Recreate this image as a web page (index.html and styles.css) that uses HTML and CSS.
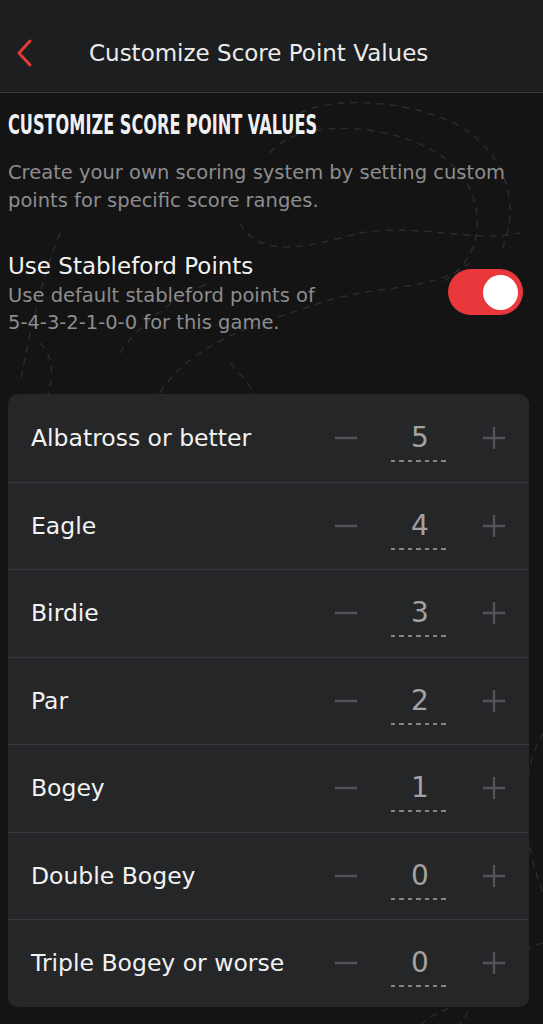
FILE: index.html
```html
<!DOCTYPE html>
<html lang="en">
<head>
    <meta charset="UTF-8">
    <meta name="viewport" content="width=device-width, initial-scale=1.0">
    <title>Customize Score Point Values</title>
    <link rel="stylesheet" href="styles.css">
</head>
<body>

<!-- Top bar -->
<header class="topbar">
    <button class="back-btn" aria-label="Back">
        <svg width="18" height="28" viewBox="0 0 18 28">
            <path d="M15 2 L4 14 L15 26" fill="none" stroke="#e53935" stroke-width="3" stroke-linecap="round" stroke-linejoin="round"/>
        </svg>
    </button>
    <h1 class="topbar-title">Customize Score Point Values</h1>
</header>

<main class="content">
    <!-- decorative course lines in the background -->
    <svg class="topo" width="543" height="932" viewBox="0 0 543 932">
        <g fill="none" stroke="#2b2b2d" stroke-width="1.5" stroke-dasharray="7 6">
            <path d="M300 20 C 340 0, 430 10, 470 40 C 510 70, 520 120, 500 160"/>
            <path d="M270 60 C 300 20, 420 30, 460 80 C 490 120, 480 170, 440 190"/>
            <path d="M240 130 C 260 170, 320 150, 360 140 C 420 130, 470 150, 520 140"/>
            <path d="M160 300 C 190 250, 260 230, 320 210 C 380 190, 430 200, 470 170"/>
            <path d="M60 140 C 40 190, 30 240, 20 290"/>
            <path d="M120 260 C 140 230, 180 200, 210 190"/>
            <path d="M40 250 C 60 270, 50 300, 40 320"/>
            <path d="M230 270 C 250 290, 260 310, 270 320"/>
            <path d="M543 640 C 520 680, 520 740, 543 800"/>
            <path d="M543 850 C 500 860, 480 900, 460 932"/>
            <path d="M420 932 C 440 915, 470 905, 500 910"/>
        </g>
    </svg>

    <h2 class="section-title">Customize Score Point Values</h2>
    <p class="section-desc">Create your own scoring system by setting custom points for specific score ranges.</p>

    <div class="setting-row">
        <div class="setting-text">
            <h3 class="setting-name">Use Stableford Points</h3>
            <p class="setting-hint">Use default stableford points of<br>5-4-3-2-1-0-0 for this game.</p>
        </div>
        <label class="switch">
            <input type="checkbox" checked>
            <span class="slider"></span>
        </label>
    </div>

    <!-- Score values -->
    <div class="score-card" id="scoreCard"></div>
</main>

<script>
    const scores = [
        { name: 'Albatross or better', points: 5 },
        { name: 'Eagle', points: 4 },
        { name: 'Birdie', points: 3 },
        { name: 'Par', points: 2 },
        { name: 'Bogey', points: 1 },
        { name: 'Double Bogey', points: 0 },
        { name: 'Triple Bogey or worse', points: 0 }
    ];

    const card = document.getElementById('scoreCard');
    scores.forEach(score => {
        const row = document.createElement('div');
        row.className = 'score-row';
        row.innerHTML = `
            <span class="score-name">${score.name}</span>
            <div class="stepper">
                <span class="step-btn">
                    <svg width="22" height="22" viewBox="0 0 22 22"><path d="M0 11 H22" stroke="#525356" stroke-width="2.4"/></svg>
                </span>
                <span class="score-value">${score.points}</span>
                <span class="step-btn">
                    <svg width="22" height="22" viewBox="0 0 22 22"><path d="M0 11 H22 M11 0 V22" stroke="#525356" stroke-width="2.4"/></svg>
                </span>
            </div>
        `;
        card.appendChild(row);
    });
</script>
</body>
</html>
```

FILE: styles.css
```css
* {
    box-sizing: border-box;
}

body {
    font-family: "DejaVu Sans", sans-serif;
    margin: 0;
    padding: 0;
    background-color: #141415;
    color: #f2f2f2;
}

.topbar {
    height: 93px;
    padding-top: 13px;
    display: flex;
    align-items: center;
    background-color: #1d1e20;
    border-bottom: 1px solid #3b3c3e;
}

.back-btn {
    background: none;
    border: none;
    padding: 0;
    margin-left: 15px;
    width: 18px;
    height: 28px;
    cursor: pointer;
}

.topbar-title {
    margin: 0 0 0 56px;
    font-size: 23px;
    font-weight: 400;
    color: #ececec;
}

.content {
    position: relative;
    padding: 0 8px 18px;
}

.topo {
    position: absolute;
    left: 0;
    top: 0;
    z-index: 0;
}

.section-title,
.section-desc,
.setting-row,
.score-card {
    position: relative;
    z-index: 1;
}

.section-title {
    margin: 0;
    padding-top: 16px;
    font-family: "DejaVu Sans Condensed", "DejaVu Sans", sans-serif;
    font-size: 27px;
    font-weight: 700;
    line-height: 32px;
    text-transform: uppercase;
    white-space: nowrap;
    transform: scaleX(0.665);
    transform-origin: left center;
    color: #f0f0f0;
}

.section-desc {
    margin: 18px 0 0;
    font-size: 19.5px;
    line-height: 28px;
    color: #8d8d8f;
}

.setting-row {
    display: flex;
    justify-content: space-between;
    align-items: center;
    margin-top: 36px;
    padding-right: 12px;
}

.setting-name {
    margin: 0;
    font-size: 23px;
    font-weight: 400;
    line-height: 31px;
    color: #f2f2f2;
}

.setting-hint {
    margin: 0;
    font-size: 19.5px;
    line-height: 27px;
    color: #8d8d8f;
}

.switch {
    position: relative;
    width: 75px;
    height: 46px;
    margin-top: -3px;
}

.switch input {
    display: none;
}

.slider {
    position: absolute;
    inset: 0;
    border-radius: 23px;
    background-color: #e8383b;
}

.slider::after {
    content: "";
    position: absolute;
    top: 5.5px;
    right: 5.5px;
    width: 35px;
    height: 35px;
    border-radius: 50%;
    background-color: #fff;
}

.score-card {
    margin-top: 58px;
    margin-right: 6px;
    background-color: #252628;
    border-radius: 10px;
    overflow: hidden;
}

.score-row {
    height: 87.5px;
    display: flex;
    align-items: center;
    justify-content: space-between;
    padding: 0 24px 0 23px;
    border-top: 1px solid #38393c;
}

.score-row:first-child {
    border-top: none;
}

.score-name {
    font-size: 23.5px;
    font-weight: 400;
    color: #f2f2f2;
}

.stepper {
    display: flex;
    align-items: center;
    gap: 34px;
}

.step-btn {
    display: flex;
    width: 22px;
    height: 22px;
}

.score-value {
    position: relative;
    width: 58px;
    text-align: center;
    font-size: 28px;
    line-height: 34px;
    color: #a2a2a4;
}

.score-value::after {
    content: "";
    position: absolute;
    left: 0;
    right: 0;
    bottom: -7px;
    height: 2px;
    background: repeating-linear-gradient(to right, #858587 0 4.5px, transparent 4.5px 8.4px);
}
```
